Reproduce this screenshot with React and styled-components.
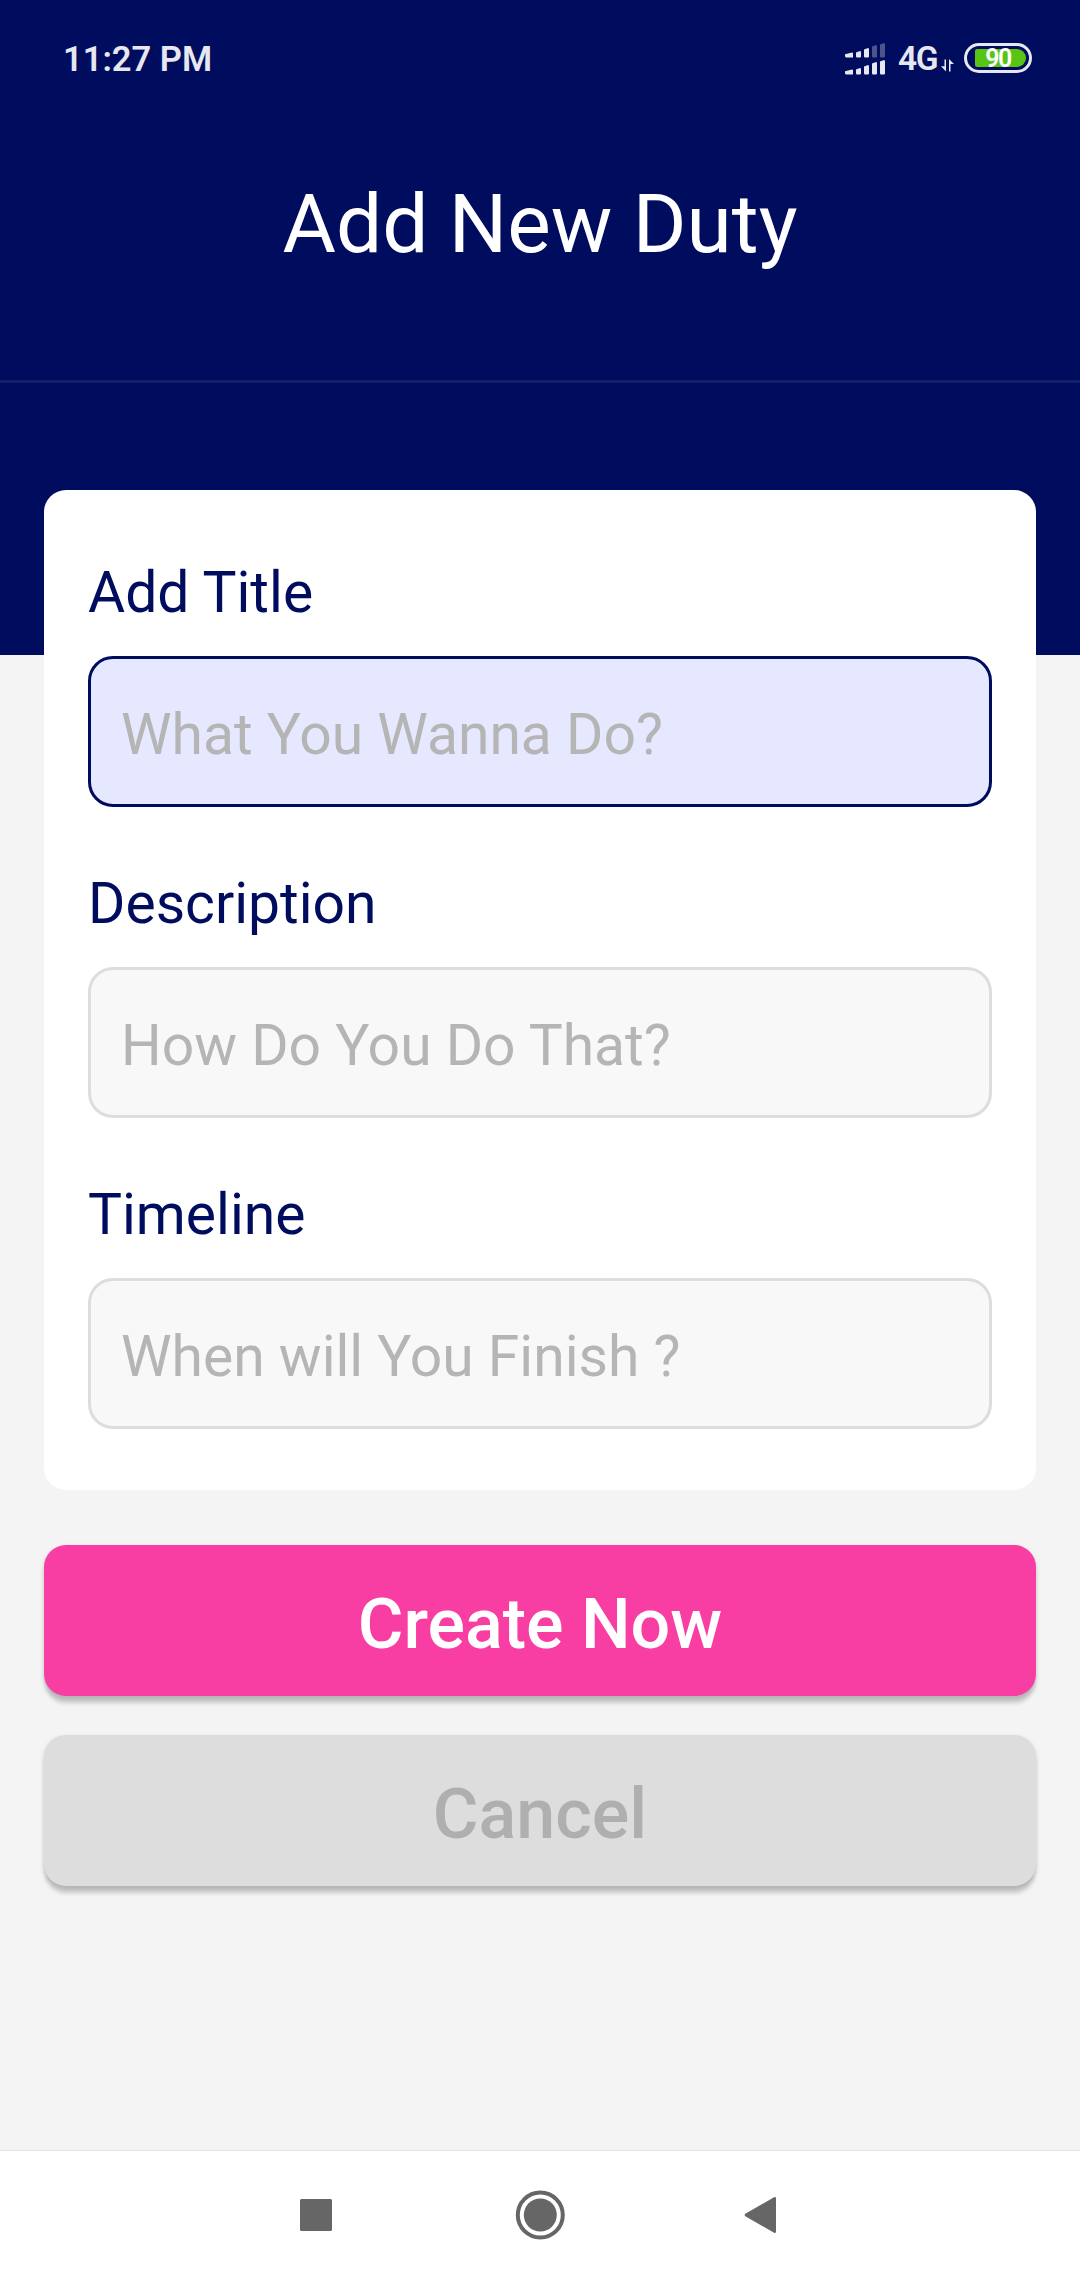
import React from "react";
import styled, { createGlobalStyle } from "styled-components";

const NAVY = "#000c5d";
const PALE = "#e6e7f0";

const GlobalStyle = createGlobalStyle`
  * { box-sizing: border-box; }
  body { margin: 0; background: #f4f4f4; font-family: Roboto, sans-serif; }
`;

const Screen = styled.div`
  width: 1080px;
  height: 2280px;
  display: flex;
  flex-direction: column;
  overflow: hidden;
  background: #f4f4f4;
`;

const Header = styled.header`
  flex: none;
  height: 655px;
  background: ${NAVY};
`;

const StatusBar = styled.div`
  display: flex;
  align-items: center;
  justify-content: space-between;
  height: 118px;
  padding: 0 48px 0 63px;
  color: ${PALE};
`;

const Clock = styled.span`
  font-size: 34.5px;
  line-height: 40px;
  font-weight: 650;
`;

const StatusIcons = styled.div`
  display: flex;
  align-items: center;
`;

const Network = styled.span`
  width: 40px;
  margin-left: 13px;
  font-size: 33.5px;
  line-height: 40px;
  font-weight: 650;
  letter-spacing: -1.5px;
`;

const DataArrows = styled.svg`
  margin: 13px 10px 0 3px;
`;

const Battery = styled.div`
  display: flex;
  width: 68px;
  height: 30px;
  margin-top: -2px;
  padding: 3px 3px 3px 8px;
  border: 3px solid ${PALE};
  border-radius: 15px;
`;

const Charge = styled.div`
  display: flex;
  align-items: center;
  justify-content: center;
  width: 51px;
  padding: 2px 5px 0 0;
  border-radius: 2px 9px 9px 2px;
  background: #58c516;
  color: #fff;
  font-size: 25px;
  line-height: 18px;
  font-weight: 650;
  letter-spacing: -1.5px;
`;

const TitleBar = styled.div`
  display: flex;
  justify-content: center;
  height: 265px;
  padding-top: 58px;
  border-bottom: 3px solid #141f69;
`;

const Title = styled.h1`
  margin: 0;
  color: #fff;
  font-size: 82px;
  line-height: 97px;
  font-weight: 400;
`;

const Main = styled.main`
  flex: 1;
  margin-top: -165px;
  padding: 0 44px;
`;

const Card = styled.section`
  display: flex;
  flex-direction: column;
  gap: 64px;
  padding: 70px 44px 61px;
  border-radius: 22px;
  background: #fff;
`;

const Field = styled.label`
  display: flex;
  flex-direction: column;
  gap: 30px;
`;

const FieldLabel = styled.span`
  color: ${NAVY};
  font-size: 57px;
  line-height: 66px;
`;

const TextInput = styled.input`
  width: 100%;
  height: 151px;
  padding: 5px 30px 0;
  border: 3px solid ${(p) => (p.$active ? NAVY : "#dddddd")};
  border-radius: 25px;
  outline: none;
  background: ${(p) => (p.$active ? "#e5e8ff" : "#f8f8f8")};
  color: ${NAVY};
  font-family: inherit;
  font-size: 57px;

  &::placeholder {
    color: #b5b5b5;
    opacity: 1;
  }
`;

const Actions = styled.div`
  display: flex;
  flex-direction: column;
  gap: 39px;
  margin-top: 55px;
`;

const Button = styled.button`
  height: 151px;
  padding: 7px 0 0;
  border: none;
  border-radius: 22px;
  background: ${(p) => (p.$primary ? "#f83ea3" : "#dddddd")};
  color: ${(p) => (p.$primary ? "#fff" : "#afafaf")};
  box-shadow: 0 8px 4px -1px rgba(0, 0, 0, 0.18), 0 2px 5px rgba(0, 0, 0, 0.13);
  font-family: inherit;
  font-size: 70px;
  font-weight: 500;
`;

const NavBar = styled.nav`
  flex: none;
  display: flex;
  justify-content: center;
  align-items: center;
  gap: 199px;
  height: 130px;
  padding-bottom: 1px;
  border-top: 1px solid #e2e2e2;
  background: #fff;
`;

const NavIcon = styled.svg`
  width: 50px;
  height: 50px;
  margin: 0 -12px;
  fill: #666;
`;

const bars = [
  [0, 4],
  [11, 6],
  [19, 9],
  [27, 12],
  [35, 14],
];

function SignalRow({ base, lit }) {
  return bars.map(([x, h], i) => (
    <path
      key={x}
      opacity={i < lit ? 1 : 0.33}
      d={
        i === 0
          ? `M0 ${base - 3.2}L7 ${base - 5}L8 ${base - 4.5}V${base}H1L0 ${base - 1}Z`
          : `M${x} ${base - h + 1}L${x + 4} ${base - h - 0.5}L${x + 5} ${base - h + 0.3}V${base - 0.7}L${x + 4.3} ${base}H${x + 0.7}L${x} ${base - 0.7}Z`
      }
    />
  ));
}

const fields = [
  { label: "Add Title", hint: "What You Wanna Do?", active: true },
  { label: "Description", hint: "How Do You Do That?" },
  { label: "Timeline", hint: "When will You Finish ?" },
];

export default function App() {
  return (
    <Screen>
      <GlobalStyle />
      <Header>
        <StatusBar>
          <Clock>11:27 PM</Clock>
          <StatusIcons>
            <svg width="40" height="32" viewBox="0 0 40 32" fill={PALE}>
              <SignalRow base={14.5} lit={3} />
              <SignalRow base={31.5} lit={5} />
            </svg>
            <Network>4G</Network>
            <DataArrows width="13" height="13" viewBox="0 0 13 13" fill={PALE}>
              <path d="M3.5 0.5H5V12.5L0 7.2H3.5Z" />
              <path d="M8 12.5H9.5V5H13L8 0Z" />
            </DataArrows>
            <Battery>
              <Charge>90</Charge>
            </Battery>
          </StatusIcons>
        </StatusBar>
        <TitleBar>
          <Title>Add New Duty</Title>
        </TitleBar>
      </Header>
      <Main>
        <Card>
          {fields.map((f) => (
            <Field key={f.label}>
              <FieldLabel>{f.label}</FieldLabel>
              <TextInput placeholder={f.hint} $active={f.active} />
            </Field>
          ))}
        </Card>
        <Actions>
          <Button $primary>Create Now</Button>
          <Button>Cancel</Button>
        </Actions>
      </Main>
      <NavBar>
        <NavIcon viewBox="0 0 50 50">
          <rect x="10" y="9" width="32" height="32" rx="1.5" />
        </NavIcon>
        <NavIcon viewBox="0 0 50 50">
          <circle cx="25.3" cy="25" r="22.5" fill="none" stroke="#666" strokeWidth="4" />
          <circle cx="25.3" cy="25" r="16.5" />
        </NavIcon>
        <NavIcon viewBox="0 0 50 50">
          <path d="M5.3 26.2Q4 25 5.3 23.8L34 7.3Q36 6.5 36 8.5V41.5Q36 43.5 34 42.7Z" />
        </NavIcon>
      </NavBar>
    </Screen>
  );
}
